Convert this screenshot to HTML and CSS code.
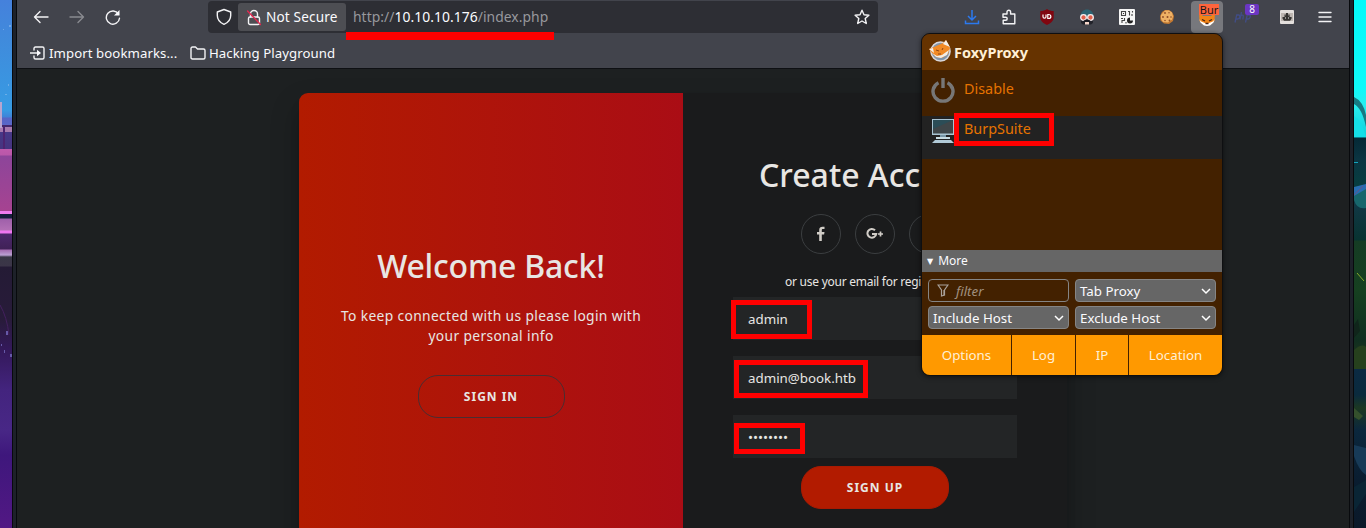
FILE: index.html
```html
<!DOCTYPE html>
<html lang="en">
<head>
<meta charset="utf-8">
<title>Book - Register</title>
<link rel="stylesheet" href="styles.css">
</head>
<body>
<div class="desktop">
  <div class="wall wall-left"><svg width="12" height="528"><g fill="#9cc5f0"><path d="M9 25h2v2h-2zM3 29h1v1H3zM8 84h1v2H8zM5 94h2v1H5z" opacity=".5"/></g><path d="M0 102h2v26H0z" fill="#b8a5cf"/><path d="M3 127h2v22H3z" fill="#4d2370"/><path d="M6 331h2v4H6zM4 350h1v3H4zM10 354h2v3h-2zM1 344h1v2H1z" fill="#6659a8"/><path d="M0 305q7 12 9 30" stroke="#43205e" fill="none"/></svg></div>
  <div class="edge"></div>
  <main class="window">
    <header class="toolbar">
      <nav class="nav">
        <svg width="16" height="16" viewBox="0 0 16 16" class="ln"><path d="M15 8H1.500M7 2.500 1.500 8 7 13.500"/></svg>
        <svg width="16" height="16" viewBox="0 0 16 16" class="ln dim"><path d="M1 8h13.500M9 2.500 14.500 8 9 13.500"/></svg>
        <svg width="16" height="16" viewBox="0 0 16 16" class="ln"><path d="M13.500 5A6.600 6.600 0 1 0 14.500 9.200"/><path d="M14.500 1v5.500H9z" fill="#fbfbfe" stroke="none"/></svg>
      </nav>
      <div class="urlbar">
        <svg class="shield ln" width="16" height="18" viewBox="0 0 16 18"><path d="M8 1.500 14.700 4v3.500c0 4.200-3 7.200-6.700 8.800C4.300 14.700 1.300 11.700 1.300 7.500V4z"/></svg>
        <div class="secure">
          <svg width="14" height="17" viewBox="0 0 14 17" class="ln"><rect x="1.500" y="8" width="11" height="7.500" rx="1.500"/><path d="M3.500 8V5a3.500 3.500 0 0 1 7 0v3"/><path d="M.5 2 13.500 15.500" stroke="#e22850"/></svg>
          <span>Not Secure</span>
        </div>
        <span class="url">http://<b>10.10.10.176</b>/index.php</span>
        <svg class="star ln" width="16" height="16" viewBox="0 0 16 16"><path d="m8 1.200 2 4.500 4.900.5-3.700 3.300 1.100 5L8 12l-4.300 2.500 1.100-5L1.100 6.200 6 5.700z"/></svg>
      </div>
      <div class="tools">
        <i><svg width="16" height="16" viewBox="0 0 16 16" fill="none" stroke="#2b79ef" stroke-width="1.500"><path d="M8 1v9.500M4 7l4 4 4-4M1.500 11.500v3h13v-3"/></svg></i>
        <i><svg width="16" height="16" viewBox="0 0 16 16" class="ln"><path d="M2 5h4V3a1.800 1.800 0 0 1 3.600 0v2h4.200v9.700H2.200v-3.500h2.500a1.500 1.500 0 0 0 0-3H2z"/></svg></i>
        <i><svg width="16" height="16" viewBox="0 0 16 16"><path d="M8 0c2 1.600 4 2 6.700 2.100V8c0 4-2.700 6.300-6.700 8C4 14.300 1.300 12 1.300 8V2.100C4 2 6 1.600 8 0z" fill="#800610"/><path d="M4 5.500v2.200c0 2 3 2 3 0V5.500M8.800 5.500v4h.8c3 0 3-4 0-4z" fill="none" stroke="#fff" stroke-width="1.200"/></svg></i>
        <i><svg width="16" height="16" viewBox="0 0 16 16"><path d="M1.500 8C1-2 15-2 14.500 8z" fill="#2c6473"/><path d="M2 9h12v5l-2 1.500H4L2 14z" fill="#22232a"/><path d="M6 13h4v2.500H6z" fill="#f5d6c9"/><circle cx="4.500" cy="8.500" r="2.800" fill="#e0604c" stroke="#f6eeee" stroke-width="1.300"/><circle cx="11.500" cy="8.500" r="2.800" fill="#e0604c" stroke="#f6eeee" stroke-width="1.300"/><path d="M5 12.500q3-2 6 0" stroke="#161820" stroke-width="1.800" fill="none"/></svg></i>
        <i><svg width="16" height="16" viewBox="0 0 16 16"><rect width="16" height="16" rx="1" fill="#f6f6f6"/><g fill="none" stroke="#444" stroke-width="1.100"><path d="M2.500 2.500h4v4h-4zM9 2.500h1.500v4M13.500 2v1.500M13 5v2M2 9.500h2M5.500 9v2.500H3V14M7 13v1.500"/></g><path d="M4 4h1v1H4z" fill="#333"/><path d="M11 8.500v3h3a3 3 0 1 1-3-3z" fill="#222"/></svg></i>
        <i><svg width="16" height="16" viewBox="0 0 16 16"><path d="M6 1 10 1l3 2 2 4-1 5-4 3-5-.5-3.500-3L1 7l2-4z" fill="#c57a31"/><path d="M6 1.500h4l3 2 1 4-1 3-4 3-5-.5-2-3L2 6z" fill="#efb265"/><g fill="#8e4b26"><circle cx="6" cy="4" r=".9"/><circle cx="10" cy="3.700" r=".7"/><circle cx="4" cy="8" r=".9"/><circle cx="8.500" cy="8" r="1"/><circle cx="12" cy="8" r=".8"/><circle cx="6" cy="11.500" r=".8"/><circle cx="10.500" cy="11.500" r=".9"/></g></svg></i>
        <i class="active"><svg width="18" height="18" viewBox="0 0 18 18"><path d="M1 3 5 7h8l4-4-.5 9-4 4h-7L1.500 12z" fill="#f18417"/><path d="M1 9c1 4 4 4 8 6 4-2 7-2 8-6l-1.500 4.500-3.500 3-3 .5-3-.5-3.500-3z" fill="#fff"/><path d="M4 10.500l3 1.500M14 10.500l-3 1.500M7.500 14.500h3" stroke="#492314" stroke-width="1.300"/></svg><em class="badge burp">Bur</em></i>
        <i><svg class="php-mark" width="18" height="11" viewBox="0 0 18 11" fill="none" stroke="#414d86" stroke-width="1.300"><path d="M1 10.500 2.700 3h2c2 0 1 4-1 4H2M7.500 0 6 7.500M7 3.500c3-1 2.500 0 1.800 4M11.500 10.500 13.200 3h2c2 0 1 4-1 4h-1.700"/></svg><em class="badge count">8</em></i>
        <i><svg width="14" height="14" viewBox="0 0 14 14"><rect width="14" height="14" rx="1" fill="#e3dfdc"/><path d="M1 3h12v8H1z" fill="#bcb5b0"/><path d="M2.500 7h2V4.500h1.300V6H6V3h2v3h.3V4.500h1.300V7h2v1.500l-1.500 2.300H4L2.500 8.500z" fill="#353331"/><path d="M5 7.500h1v1H5zM8 7.500h1v1H8z" fill="#eee"/></svg></i>
        <i class="menu"><svg width="14" height="12" viewBox="0 0 14 12" class="ln"><path d="M1 1.500h12M1 6h12M1 10.500h12"/></svg></i>
      </div>
    </header>
    <div class="bookmarks">
      <svg width="15" height="14" viewBox="0 0 15 14" class="ln"><path d="M4 4V2.500C4 1.500 4.500 1 5.500 1h7c1 0 1.500.5 1.500 1.500v9c0 1-.5 1.500-1.500 1.500h-7C4.500 13 4 12.500 4 11.500V10M0 7h8"/><path d="M7 3.800 11 7l-4 3.200z" fill="#fbfbfe" stroke="none"/></svg>
      <span class="import">Import bookmarks...</span>
      <svg width="16" height="14" viewBox="0 0 16 14" class="ln folder"><path d="M1 11.500v-9C1 1.500 1.500 1 2.500 1h3l2 2h6c1 0 1.500.5 1.500 1.500v7c0 1-.5 1.500-1.500 1.500h-11C1.500 13 1 12.500 1 11.500z"/></svg>
      <span class="hack">Hacking Playground</span>
    </div>
    <section class="page">
      <div class="card">
        <div class="welcome">
          <h1>Welcome Back!</h1>
          <p>To keep connected with us please login with<br>your personal info</p>
          <button class="btn ghost">SIGN IN</button>
        </div>
        <form class="create">
          <h1>Create Acc</h1>
          <div class="social">
            <span><svg width="10" height="16" viewBox="0 0 10 16"><path d="M8.500 3H7c-1 0-1.200.5-1.200 1.300V6h2.700l-.4 2.500H5.800V15H3.200V8.500H1V6h2.200V4C3.200 1.800 4.500.7 6.500.7h2z" fill="#d1cdc7"/></svg></span>
            <span><svg width="18" height="14" viewBox="0 0 18 14"><path d="M9 3.200A4.400 4.400 0 1 0 10.200 7H6" fill="none" stroke="#d1cdc7" stroke-width="2"/><path d="M12 7h5M14.500 4.500v5" stroke="#d1cdc7" stroke-width="1.700"/></svg></span>
            <span></span>
          </div>
          <div class="hint">or use your email for regi</div>
          <div class="field"><span>admin</span></div>
          <div class="field"><span>admin@book.htb</span></div>
          <div class="field"><span>••••••••</span></div>
          <button class="btn solid">SIGN UP</button>
        </form>
      </div>
    </section>
  </main>
  <div class="edge"></div>
  <div class="wall wall-right"><svg width="12" height="528"><path d="M0 97q9 4 12 18v12Q8 108 0 104z" fill="#167a83"/><path d="M0 116q8 4 12 21H0z" fill="#15dfe8"/><path d="M0 162h4v1H0z" fill="#13a4bc"/><path d="M0 187 12 184v20Q4 207 0 197z" fill="#286db0"/><path d="M0 195 9 186" stroke="#61558a"/><path d="M0 196 12 189v19Q3 210 0 200z" fill="#17666c"/><path d="M3 273l7 8" stroke="#87a82b"/><path d="M0 325l4-6 2 12-6 7z" fill="#10251b"/><path d="M0 350q8-7 12-3v22H0z" fill="#26401d"/><path d="M0 408l9 8-4 4-5-3z" fill="#34502c"/><path d="M0 445l12 3v27Q5 471 0 456z" fill="#173a57"/><path d="M0 487l12-7v14L0 512z" fill="#0a2535"/></svg></div>
</div>

<aside class="popup">
  <div class="brand"><svg width="22" height="22" viewBox="0 0 22 22"><circle cx="11.500" cy="11.500" r="9.500" fill="#8295aa" stroke="#d9d8dc" stroke-width="1.600"/><path d="M0 9 5 7l9-4 3-3 4 8-2 6-6 4-6-1-4-4z" fill="#f18a26"/><path d="M14 4l3-4 4 7zM0 9l4-1 1 5zM3 13l5 3 5-1 7-5-2 5-6 3-5-1z" fill="#f3eee8"/><path d="M7 10l3 1M14 8l-1 2M9 14l3 0" stroke="#914510"/></svg><strong>FoxyProxy</strong></div>
  <div class="row disable"><svg width="24" height="26" viewBox="0 0 24 26" fill="none" stroke="#777" stroke-width="3.400"><path d="M7.500 4.800a10 9.700 0 1 0 9 0M12 0v10"/></svg><span>Disable</span></div>
  <div class="row burprow"><svg width="24" height="26" viewBox="0 0 24 26"><path d="M1 1h22v16H1z" fill="#a9c4d2"/><path d="M2 2h20v13.500H2z" fill="#3f4649"/><path d="M2 2h20L2 11z" fill="#2b4d57"/><path d="M9 17h6v3H9z" fill="#7896a6"/><path d="M5 19h14v2H5z" fill="#c8dce3"/><path d="M4 22h16l3 3H1z" fill="#b2cbd8"/></svg><span>BurpSuite</span></div>
  <div class="space"></div>
  <div class="more"><i>▼</i><span>More</span></div>
  <div class="controls">
    <div class="ctl filter"><svg width="12" height="13" viewBox="0 0 12 13" fill="none" stroke="#aaa29b" stroke-width="1.200"><path d="M1 1h10L7.500 6v5l-3 1V6z"/><path d="M7 6v5"/></svg><span>filter</span></div>
    <div class="ctl"><span>Tab Proxy</span><svg class="chev" width="10" height="7" viewBox="0 0 10 7"><path d="M1 1l4 4 4-4"/></svg></div>
    <div class="ctl"><span>Include Host</span><svg class="chev" width="10" height="7" viewBox="0 0 10 7"><path d="M1 1l4 4 4-4"/></svg></div>
    <div class="ctl"><span>Exclude Host</span><svg class="chev" width="10" height="7" viewBox="0 0 10 7"><path d="M1 1l4 4 4-4"/></svg></div>
  </div>
  <footer><span>Options</span><span>Log</span><span>IP</span><span>Location</span></footer>
</aside>
<div class="mark m-url"></div>
<div class="mark m-burp"></div>
<div class="mark m-name"></div>
<div class="mark m-mail"></div>
<div class="mark m-pass"></div>
</body>
</html>
```
FILE: styles.css
```css
* { box-sizing: border-box; }
body { margin: 0; overflow: hidden; font: 13.33px "Noto Sans", sans-serif; color: #fbfbfe; background: #1d2021; }
svg { display: block; flex: none; }
h1, p { margin: 0; }
i, em { font-style: normal; }
.ln { fill: none; stroke: #f3f3f5; stroke-width: 1.4; stroke-linejoin: round; stroke-linecap: round; }
.dim { opacity: .4; }
.desktop { display: grid; grid-template-columns: 12px 5px 1332px 5px 12px; height: 528px; }
.edge { background: #1d2129; border-left: 1px solid #080a0d; border-right: 1px solid #080a0d; }
.wall-left { background: linear-gradient(#4581dc 0, #408bdc 40px, #379be3 110px, #3f83d8 117px, #5664c5 118px, #5968c8 125px, #42286b 125px, #42286b 127px, #a77aae 127px, #a77aae 132px, #473888 132px, #46347f 149px, #c05aad 149px, #b957a9 155px, #8d459a 156px, #a64391 211px, #ef7bee 211px, #ef7bee 214px, #171e3d 214px, #171e3d 218px, #9f60aa 219px, #b270b5 230px, #ef75f1 231px, #ef75f1 233px, #4b286b 234px, #402157 249px, #a36bb0 250px, #bba0d3 255px, #393746 257px, #3b3548 266px, #241b35 267px, #281b3a 320px, #34195b 350px, #43247e 390px, #482786 430px, #3e177c 455px, #521884 528px); }
.wall-right { background: linear-gradient(#05f9fa 0, #0ffafa 88px, #28eef0 105px, #11cfdb 137px, #052936 138px, #0b3542 160px, #073d40 184px, #123848 200px, #083331 240px, #153c24 241px, #164020 290px, #102e20 340px, #263a1a 368px, #0b2a43 369px, #0a2a3d 395px, #1c3822 408px, #0b273d 430px, #0a1d30 480px, #0b1929 528px); }
.window { display: grid; grid-template-rows: 34px 35px 459px; overflow: hidden; }
.toolbar { display: flex; background: #42444c; }
.nav { display: flex; gap: 20px; padding: 9px 0 0 16px; width: 191px; }
.urlbar { display: flex; align-items: center; width: 670px; height: 32px; margin-top: 1px; background: #2d2e34; border-radius: 4px; font-size: 13.6px; }
.shield { margin: 0 6px 0 8px; }
.secure { display: flex; align-items: center; gap: 5px; width: 108px; height: 28px; padding-left: 9px; border-radius: 3px; background: #4d4e53; white-space: nowrap; }
.secure span { margin-top: -2px; letter-spacing: .15px; }
.url { margin: -2px 0 0 7px; color: #97989d; font-size: 13.9px; letter-spacing: .04px; }
.url b { font-weight: 400; color: #fbfbfe; }
.star { margin: 0 8px 0 auto; }
.tools { display: flex; margin-left: 74px; }
.tools i { position: relative; display: grid; place-items: center; width: 32px; height: 32px; margin: 1px 4px 0; border-radius: 4px; flex: none; }
.tools .menu { margin-left: 2px; }
.tools i:nth-child(2) { margin-left: 1px; margin-right: 2px; }
.tools .active { background: #77787d; }
.active svg { margin-top: 1px; }
.badge { position: absolute; font-size: 11px; line-height: 11px; }
.burp { left: 8px; top: 3px; width: 20px; height: 11px; background: #ff643c; color: #171717; text-align: center; }
.count { left: 14px; top: 3px; width: 14px; height: 11px; background: #6b36c2; border-radius: 2px; text-align: center; font-size: 10px; }
.php-mark { margin-left: -8px; }
.bookmarks { display: flex; align-items: center; background: #42444c; border-bottom: 1px solid #0e1013; padding: 4px 0 0 13px; font-size: 13.2px; }
.import { width: 128px; margin: 0 13px 0 4px; white-space: nowrap; letter-spacing: .08px; }
.hack { margin-left: 3px; letter-spacing: .08px; }
.folder { margin-top: -1px; }
.page { display: flex; padding: 24px 0 0 282px; background: #1d2021; overflow: hidden; }
.card { display: grid; grid-template-columns: 384px 384px; width: 768px; height: 480px; flex: none; border-radius: 9px; box-shadow: 0 14px 28px rgba(0,0,0,.25), 0 10px 10px rgba(0,0,0,.1); }
.welcome { display: flex; flex-direction: column; align-items: center; padding-top: 152px; border-radius: 9px 0 0 9px; background: linear-gradient(to right, #b21b00, #aa0d15); color: #e8e6e3; }
h1 { font-weight: 500; font-size: 32px; line-height: 42px; white-space: nowrap; color: #e8e6e3; letter-spacing: -.2px; }
.welcome p { margin-top: 19px; text-align: center; font-size: 13.8px; line-height: 20px; letter-spacing: .36px; white-space: nowrap; }
.btn { padding: 0; height: 43px; border-radius: 20px; color: #e8e6e3; font: 700 12px "Noto Sans", sans-serif; letter-spacing: 1px; }
.ghost { width: 147px; margin-top: 29px; background: transparent; border: 1px solid #4a2d31; }
.create { display: flex; flex-direction: column; align-items: center; padding-top: 61px; background: #1a1b1c; border-radius: 0 9px 9px 0; }
.create h1 { align-self: flex-start; margin-left: 76px; letter-spacing: 0; }
.social { display: flex; gap: 14px; margin-top: 18px; }
.social span { display: grid; place-items: center; width: 40px; height: 40px; border: 1px solid #3b3e40; border-radius: 50%; }
.hint { align-self: flex-start; height: 16px; margin: 20px 0 7px 102px; font-size: 12px; line-height: 16px; letter-spacing: -.25px; white-space: nowrap; color: #e8e6e3; }
.field { width: 284px; height: 43px; margin-bottom: 16px; padding: 12px 15px; background: #232526; font-size: 13.33px; line-height: 20px; color: #e8e6e3; }
.field:nth-last-child(2) { margin-bottom: 8px; }
.solid { width: 148px; background: #b21b00; border: 1px solid #a91a02; }
.popup { position: absolute; left: 921px; top: 33px; width: 302px; height: 343px; display: flex; flex-direction: column; overflow: hidden; border: 1px solid #0e0f11; border-radius: 9px; background: #432100; box-shadow: 0 1px 5px #0008; }
.brand { display: flex; align-items: center; gap: 3px; height: 36px; padding-left: 7px; background: #663300; color: #ffefd5; font-size: 14.5px; }
.brand svg { margin-top: -2px; }
.row { display: flex; gap: 9px; padding-left: 9px; font-size: 14.4px; line-height: 20px; color: #e67300; }
.disable { height: 46px; padding-top: 8px; }
.burprow { height: 43px; padding-top: 2px; background: #222; }
.row span { margin-top: 1px; }
.space { height: 91px; }
.more { display: flex; align-items: center; gap: 5px; height: 22px; padding-left: 5px; background: #666; font-size: 12px; }
.more span { margin-top: -1px; }
.more i { font: 8px "DejaVu Sans", sans-serif; }
.controls { display: grid; grid-template-columns: 141px 141px; grid-template-rows: 23px 23px; gap: 4px 6px; height: 63px; padding: 7px 6px 0; }
.ctl { display: flex; align-items: center; justify-content: space-between; padding: 0 4px; border: 1px solid #858585; border-radius: 4px; background: #666; font-size: 13.3px; }
.filter { justify-content: flex-start; gap: 7px; padding-left: 8px; background: transparent; color: #a1907f; font-style: italic; }
.chev { margin-top: 1px; }
.chev path { fill: none; stroke: #fff; stroke-width: 1.5; }
footer { display: grid; grid-template-columns: 90px 64px 53px 93px; height: 40px; background: #f90; color: #ffefd5; font-size: 13.3px; }
footer span { display: grid; place-items: center; border-right: 1px solid #432100; }
footer span:last-child { border: 0; }
.mark { position: absolute; border: 5px solid #f00; }
.m-url { left: 346px; top: 32px; width: 208px; height: 8px; border: 0; background: #f00; }
.m-burp { left: 954px; top: 113px; width: 100px; height: 33px; }
.m-name { left: 731px; top: 300px; width: 81px; height: 39px; }
.m-mail { left: 734px; top: 360px; width: 134px; height: 38px; }
.m-pass { left: 734px; top: 423px; width: 71px; height: 31px; }
```
